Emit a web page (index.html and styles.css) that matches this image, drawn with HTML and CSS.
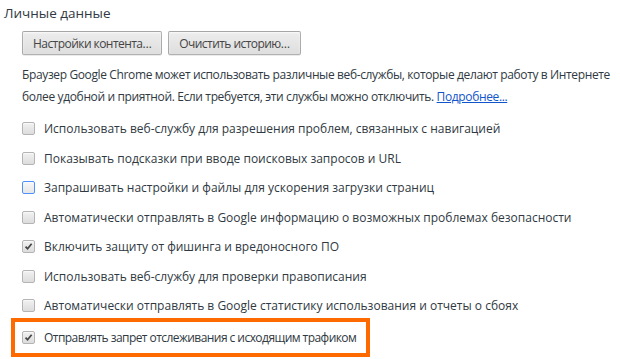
FILE: index.html
```html
<!DOCTYPE html>
<html lang="ru">
<head>
  <meta charset="UTF-8">
  <title>Личные данные</title>
  <link rel="stylesheet" href="styles.css">
</head>
<body>
  <div class="section">
    <!-- заголовок -->
    <h3 class="title">Личные данные</h3>

    <div class="content">
      <div class="buttons">
        <button type="button" class="btn">Настройки контента…</button>
        <button type="button" class="btn">Очистить историю…</button>
      </div>

      <p class="desc">
        Браузер Google Chrome может использовать различные веб-службы, которые делают работу в Интернете<br>
        более удобной и приятной. Если требуется, эти службы можно отключить. <a href="#">Подробнее...</a>
      </p>

      <!-- флажки -->
      <div class="checks">
        <label class="row"><span class="box"></span>Использовать веб-службу для разрешения проблем, связанных с навигацией</label>
        <label class="row"><span class="box"></span>Показывать подсказки при вводе поисковых запросов и URL</label>
        <label class="row"><span class="box focus"></span>Запрашивать настройки и файлы для ускорения загрузки страниц</label>
        <label class="row"><span class="box"></span>Автоматически отправлять в Google информацию о возможных проблемах безопасности</label>
        <label class="row"><span class="box checked"><svg viewBox="0 0 13 13"><path d="M3 6.6 L5.4 9.2 L10.2 3.2"/></svg></span>Включить защиту от фишинга и вредоносного ПО</label>
        <label class="row"><span class="box"></span>Использовать веб-службу для проверки правописания</label>
        <label class="row"><span class="box"></span>Автоматически отправлять в Google статистику использования и отчеты о сбоях</label>
        <label class="row highlight"><span class="box checked"><svg viewBox="0 0 13 13"><path d="M3 6.6 L5.4 9.2 L10.2 3.2"/></svg></span>Отправлять запрет отслеживания с исходящим трафиком</label>
      </div>
    </div>
  </div>
</body>
</html>
```

FILE: styles.css
```css
:root {
  --text:   #303942;
  --link:   #1155cc;
  --orange: #ff6a00;
}
* { box-sizing: border-box; }
body {
  margin: 0;
  background: #fff;
  color: var(--text);
  font-family: "Open Sans", "Noto Sans", sans-serif;
  font-size: 12px;
}
.section {
  padding: 3px 0 0 4px;
}
/* заголовок */
.title {
  margin: 0;
  font-size: 13.5px;
  font-weight: normal;
  line-height: 20px;
}
.content {
  margin-left: 18px;
}
/* кнопки */
.buttons {
  display: flex;
  gap: 6px;
  margin-top: 8px;
}
.btn {
  height: 24px;
  padding: 0 10px;
  font-family: inherit;
  font-size: 12px;
  letter-spacing: -0.55px;
  color: #444;
  background: linear-gradient(#ededed, #dedede);
  border: 1px solid rgba(0, 0, 0, 0.25);
  border-radius: 2px;
  box-shadow: 0 1px 0 rgba(0, 0, 0, 0.08), inset 0 1px 2px rgba(255, 255, 255, 0.75);
}
/* описание */
.desc {
  margin: 9px 0 0;
  line-height: 22px;
  letter-spacing: -0.37px;
  white-space: nowrap;
}
.desc a {
  color: var(--link);
}
/* флажки */
.checks {
  margin-top: 6px;
}
.row {
  display: flex;
  align-items: center;
  height: 29.5px;
  white-space: nowrap;
}
.box {
  width: 13px;
  height: 13px;
  flex: none;
  margin-right: 9px;
  border: 1px solid #b4b4b4;
  border-radius: 2px;
  background: linear-gradient(#f1f1f1, #dcdcdc);
  box-shadow: inset 0 1px 1px rgba(255, 255, 255, 0.6);
}
.box.focus {
  border-color: #4d90fe;
  background: linear-gradient(#f7f7f7, #e6e6e6);
}
.box svg {
  display: block;
  width: 11px;
  height: 11px;
}
.box svg path {
  fill: none;
  stroke: #444;
  stroke-width: 2;
}
.highlight {
  display: inline-flex;
  height: 39px;
  margin: -2.5px 0 0 -11px;
  padding: 0 10px 0 7px;
  border: 4px solid var(--orange);
  letter-spacing: -0.55px;
}
```
